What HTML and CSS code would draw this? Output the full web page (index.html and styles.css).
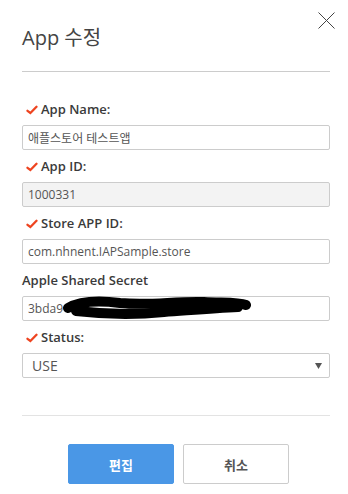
FILE: index.html
```html
<!DOCTYPE html>
<html lang="ko">
<head>
  <meta charset="UTF-8">
  <meta name="viewport" content="width=device-width, initial-scale=1.0">
  <title>App 수정</title>
  <link rel="stylesheet" href="styles.css">
</head>
<body>
  <div class="modal">
    <!-- Close button in the corner -->
    <button class="close" type="button" aria-label="닫기">
      <svg width="17" height="17" viewBox="0 0 17 17">
        <path d="M0.5 0.5 L16.5 16.5 M16.5 0.5 L0.5 16.5" stroke="#444" stroke-width="1" fill="none"/>
      </svg>
    </button>

    <h1 class="title">App 수정</h1>
    <hr class="divider">

    <form class="form">
      <div class="field">
        <label class="label"><svg class="check" width="12" height="10" viewBox="0 0 12 10"><path d="M1.5 5.8 L4.4 8 L10.5 1.8" stroke="#ee4420" stroke-width="2.3" fill="none" stroke-linecap="round"/></svg>App Name:</label>
        <input class="input" type="text" value="애플스토어 테스트앱">
      </div>

      <div class="field">
        <label class="label"><svg class="check" width="12" height="10" viewBox="0 0 12 10"><path d="M1.5 5.8 L4.4 8 L10.5 1.8" stroke="#ee4420" stroke-width="2.3" fill="none" stroke-linecap="round"/></svg>App ID:</label>
        <input class="input readonly" type="text" value="1000331" readonly>
      </div>

      <div class="field">
        <label class="label"><svg class="check" width="12" height="10" viewBox="0 0 12 10"><path d="M1.5 5.8 L4.4 8 L10.5 1.8" stroke="#ee4420" stroke-width="2.3" fill="none" stroke-linecap="round"/></svg>Store APP ID:</label>
        <input class="input" type="text" value="com.nhnent.IAPSample.store">
      </div>

      <div class="field">
        <label class="label">Apple Shared Secret</label>
        <div class="secret">
          <input class="input" type="text" value="3bda9">
          <!-- redacted part of the secret -->
          <svg class="redact" width="192" height="24" viewBox="0 0 192 24">
            <path d="M6 12 C 18 5, 35 4, 58 7 C 88 10, 112 5, 142 6 C 162 7, 176 6, 184 9" stroke="#000" stroke-width="10" fill="none" stroke-linecap="round"/>
            <path d="M14 15 C 40 18, 72 19, 102 16 C 130 14, 152 12, 176 11" stroke="#000" stroke-width="10" fill="none" stroke-linecap="round"/>
          </svg>
        </div>
      </div>

      <div class="field">
        <label class="label"><svg class="check" width="12" height="10" viewBox="0 0 12 10"><path d="M1.5 5.8 L4.4 8 L10.5 1.8" stroke="#ee4420" stroke-width="2.3" fill="none" stroke-linecap="round"/></svg>Status:</label>
        <div class="select">
          <span>USE</span>
          <svg width="7" height="6" viewBox="0 0 7 6"><path d="M0 0 H7 L3.5 6 Z" fill="#555"/></svg>
        </div>
      </div>
    </form>

    <hr class="divider light">

    <div class="actions">
      <button class="btn primary" type="button">편집</button>
      <button class="btn" type="button">취소</button>
    </div>
  </div>
</body>
</html>
```

FILE: styles.css
```css
body {
  margin: 0;
  padding: 0;
  font-family: "Open Sans", "Noto Sans CJK KR", sans-serif;
  color: #333;
  background-color: #fff;
}
.modal {
  position: relative;
  padding: 24px 18px 0 22px;
}
.close {
  position: absolute;
  top: 12px;
  right: 13px;
  padding: 0;
  border: 0;
  background: none;
  width: 17px;
  height: 17px;
  cursor: pointer;
}
.close svg {
  display: block;
}
.title {
  font-size: 20px;
  font-weight: normal;
  line-height: 28px;
  margin: 0;
  color: #444;
}
.divider {
  border: 0;
  border-top: 1px solid #ccc;
  margin: 19px 0 0 0;
}
.divider.light {
  border-top-color: #e3e3e3;
  margin-top: 37px;
}
.form {
  display: flex;
  flex-direction: column;
  gap: 7px;
  margin-top: 28px;
}
.field {
  display: flex;
  flex-direction: column;
  gap: 7px;
}
.label {
  display: flex;
  align-items: center;
  gap: 3px;
  font-size: 13px;
  font-weight: 600;
  line-height: 18px;
  color: #3a3a3a;
}
.check {
  margin-left: 4px;
  margin-top: 2px;
}
.input {
  box-sizing: border-box;
  width: 100%;
  height: 25px;
  margin: 0;
  padding: 0 5px;
  border: 1px solid #ccc;
  border-radius: 2px;
  font-family: "Open Sans", "Noto Sans CJK KR", sans-serif;
  font-size: 12px;
  color: #555;
  background: #fff;
}
.input.readonly {
  background: #f3f3f3;
}
.secret {
  position: relative;
}
.redact {
  position: absolute;
  left: 40px;
  top: 0;
}
.select {
  box-sizing: border-box;
  display: flex;
  align-items: center;
  justify-content: space-between;
  height: 25px;
  padding: 0 7px 0 9px;
  border: 1px solid #ccc;
  border-radius: 2px;
  font-size: 14px;
  color: #555;
}
.actions {
  display: flex;
  justify-content: center;
  gap: 9px;
  padding: 28px 0 0 5px;
}
.btn {
  width: 106px;
  height: 40px;
  border: 1px solid #ccc;
  border-radius: 2px;
  background: #fff;
  font-family: "Open Sans", "Noto Sans CJK KR", sans-serif;
  font-size: 13px;
  font-weight: bold;
  color: #555;
  cursor: pointer;
}
.btn.primary {
  border-color: #4a97e6;
  background: #4a97e6;
  color: #fff;
}
```
